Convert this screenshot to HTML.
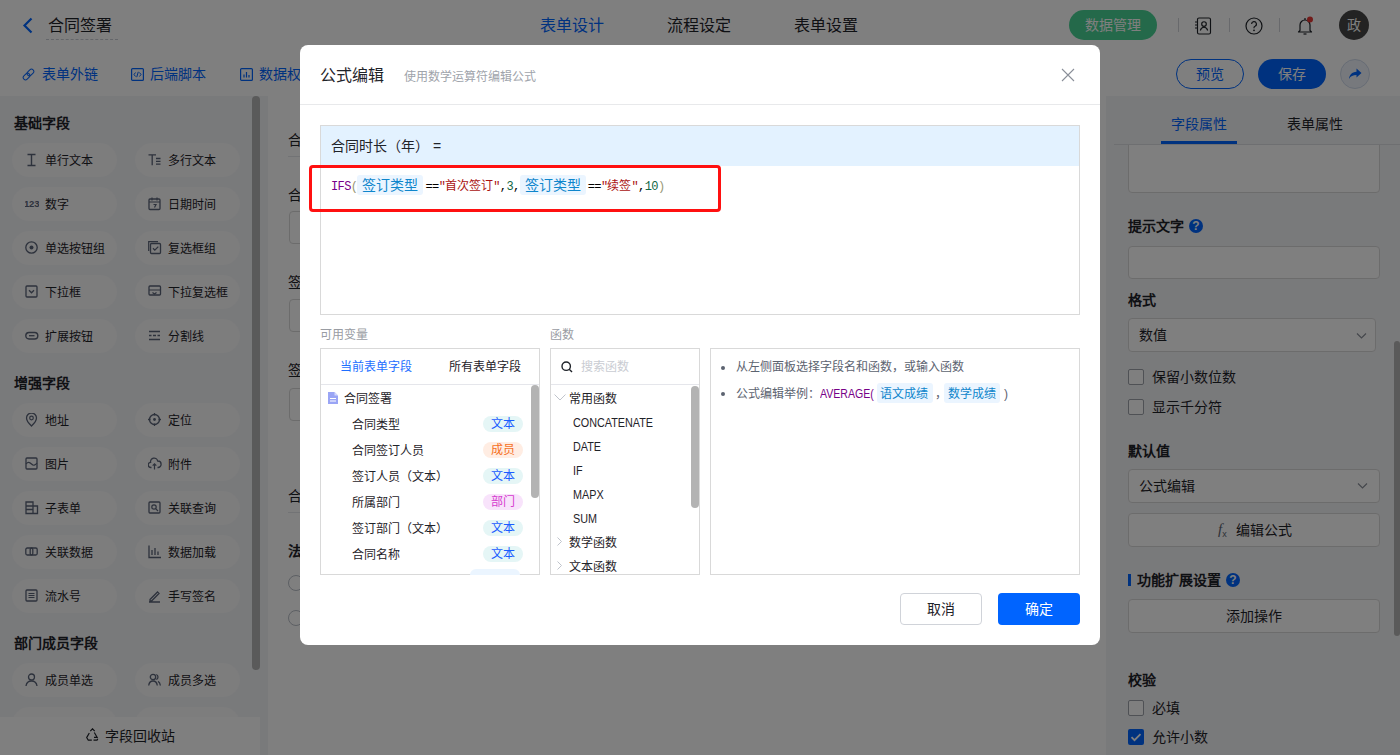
<!DOCTYPE html><html lang="zh-CN"><head><meta charset="utf-8"><style>
*{box-sizing:border-box;margin:0;padding:0}
html,body{width:1400px;height:755px;overflow:hidden;background:#fff;font-family:"Liberation Sans",sans-serif;color:#1f2329}
.a{position:absolute}
.t{position:absolute;white-space:nowrap;line-height:1}
#hdr{left:0;top:0;width:1400px;height:50px;border-bottom:1px solid #e8e9eb;background:#fff}
#tb{left:0;top:50px;width:1400px;height:46px;background:#fff}
#side{left:0;top:96px;width:268px;height:659px;background:#f4f5f7}
.chip{position:absolute;width:105px;height:34px;border-radius:17px;background:#fafafb}
.chip svg{position:absolute;left:14px;top:10px}
.chip .lb{position:absolute;left:33px;top:11px;font-size:12px;line-height:14px;color:#1f2329;white-space:nowrap}
.sh{position:absolute;left:14px;font-size:14px;font-weight:bold;line-height:14px;color:#1f2329;white-space:nowrap}
#canvas{left:268px;top:96px;width:838px;height:659px;background:#fff}
#rp{left:1106px;top:96px;width:294px;height:659px;background:#f3f4f6}
#mask{left:0;top:0;width:1400px;height:755px;background:rgba(0,0,0,.5)}
#modal{left:300px;top:45px;width:800px;height:600px;background:#fff;border-radius:8px}
</style></head><body><div class="a" style="left:0px;top:0px;width:1400px;height:51px;background:#fff;border-bottom:1px solid #e8e9eb"></div>
<svg class="a" style="left:22px;top:17px" width="12" height="17" viewBox="0 0 12 17"><path d="M9.5 1.5 L2.5 8.5 L9.5 15.5" fill="none" stroke="#0064ff" stroke-width="2.2"/></svg>
<div class="t" style="left:48px;top:18px;font-size:16px;color:#1f2329;">合同签署</div>
<div class="a" style="left:46px;top:39px;width:72px;height:1px;border-top:1px dashed #c9cdd4"></div>
<div class="t" style="left:540px;top:18px;font-size:16px;color:#0064ff;">表单设计</div>
<div class="t" style="left:667px;top:18px;font-size:16px;color:#1f2329;">流程设定</div>
<div class="t" style="left:794px;top:18px;font-size:16px;color:#1f2329;">表单设置</div>
<div class="a" style="left:1069px;top:10px;width:88px;height:30px;border-radius:15px;background:#48d294"></div>
<div class="t" style="left:1085px;top:18px;font-size:14px;color:#fff;">数据管理</div>
<div class="a" style="left:1178px;top:18px;width:1px;height:14px;background:#d0d3d9"></div>
<div class="a" style="left:1229px;top:18px;width:1px;height:14px;background:#d0d3d9"></div>
<div class="a" style="left:1279px;top:18px;width:1px;height:14px;background:#d0d3d9"></div>
<svg class="a" style="left:1194px;top:17px" width="18" height="18" viewBox="0 0 18 18"><rect x="3.5" y="1" width="13" height="16" rx="1.5" fill="none" stroke="#1f2329" stroke-width="1.15"/><circle cx="10" cy="7" r="2.3" fill="none" stroke="#1f2329" stroke-width="1.15"/><path d="M6.3 13.5c.6-2.3 2-3.3 3.7-3.3s3.1 1 3.7 3.3" fill="none" stroke="#1f2329" stroke-width="1.15"/><path d="M1 5h3M1 8h3M1 11h3" stroke="#1f2329" stroke-width="1.15"/></svg>
<svg class="a" style="left:1245px;top:17px" width="18" height="18" viewBox="0 0 18 18"><circle cx="9" cy="9" r="8" fill="none" stroke="#1f2329" stroke-width="1.2"/><path d="M6.6 7a2.4 2.4 0 1 1 3.4 2.2c-.7.3-1 .8-1 1.5v.6" fill="none" stroke="#1f2329" stroke-width="1.2"/><circle cx="9" cy="13.3" r=".9" fill="#1f2329"/></svg>
<svg class="a" style="left:1296px;top:16px" width="18" height="20" viewBox="0 0 18 20"><path d="M4 14.5V9a5 5 0 0 1 10 0v5.5l1.5 1.5h-13z" fill="none" stroke="#1f2329" stroke-width="1.2" stroke-linejoin="round"/><path d="M7.5 18h3" stroke="#1f2329" stroke-width="1.2"/><path d="M9 2v2" stroke="#1f2329" stroke-width="1.2"/><circle cx="14" cy="3.5" r="3" fill="#e53935"/></svg>
<div class="a" style="left:1339px;top:10px;width:30px;height:30px;border-radius:50%;background:#464646"></div>
<div class="t" style="left:1347px;top:18px;font-size:14px;color:#fff;">政</div>
<div class="a" style="left:0px;top:50px;width:1400px;height:46px;background:#fff"></div>
<svg class="a" style="left:22px;top:68px" width="13" height="13" viewBox="0 0 13 13"><g transform="rotate(-45 6.5 6.5)" fill="none" stroke="#0064ff" stroke-width="1"><rect x="0" y="4.2" width="7.5" height="4.6" rx="2.3"/><rect x="5.5" y="4.2" width="7.5" height="4.6" rx="2.3"/></g></svg>
<div class="t" style="left:42px;top:67px;font-size:14px;color:#0064ff;">表单外链</div>
<svg class="a" style="left:131px;top:68px" width="13" height="13" viewBox="0 0 13 13"><rect x=".6" y=".6" width="11.8" height="11.8" rx="1" fill="none" stroke="#0064ff" stroke-width="1.2"/><path d="M4.5 4.5 3 6.5l1.5 2M8.5 4.5 10 6.5l-1.5 2M7.3 3.8 5.7 9.2" fill="none" stroke="#0064ff" stroke-width="1"/></svg>
<div class="t" style="left:150px;top:67px;font-size:14px;color:#0064ff;">后端脚本</div>
<svg class="a" style="left:240px;top:68px" width="13" height="13" viewBox="0 0 13 13"><rect x=".6" y=".6" width="11.8" height="11.8" rx="1" fill="none" stroke="#0064ff" stroke-width="1.2"/><path d="M4 9.5V6.5M6.5 9.5V4M9 9.5V7" stroke="#0064ff" stroke-width="1.2"/></svg>
<div class="t" style="left:259px;top:67px;font-size:14px;color:#0064ff;">数据权限</div>
<div class="a" style="left:1176px;top:59px;width:68px;height:30px;border-radius:15px;border:1px solid #0064ff"></div>
<div class="t" style="left:1196px;top:67px;font-size:14px;color:#0064ff;">预览</div>
<div class="a" style="left:1258px;top:59px;width:68px;height:30px;border-radius:15px;background:#0064ff"></div>
<div class="t" style="left:1278px;top:67px;font-size:14px;color:#fff;">保存</div>
<div class="a" style="left:1340px;top:59px;width:30px;height:30px;border-radius:50%;border:1px solid #cfd9ea;background:#eef3fb"></div>
<svg class="a" style="left:1347px;top:66px" width="16" height="16" viewBox="0 0 16 16"><path d="M9.5 2.5 14.5 7l-5 4.5V9C6 9 3.5 10 2 13c.4-4.2 2.8-7 7.5-7.3z" fill="#0064ff"/></svg>
<div class="a" style="left:0px;top:96px;width:268px;height:659px;background:#f3f4f6"></div>
<div class="t" style="left:14px;top:116px;font-size:14px;color:#1f2329;font-weight:bold">基础字段</div>
<div class="chip" style="left:12px;top:143px"><svg width="14" height="14" viewBox="0 0 14 14" style="left:13px;top:10px"><path d="M2.5 1.5h8M2.5 12.5h8M6.5 1.5v11" stroke="#5b6478" stroke-width="1.4" fill="none"/></svg><div class="lb">单行文本</div></div>
<div class="chip" style="left:135px;top:143px"><svg width="14" height="14" viewBox="0 0 14 14" style="left:13px;top:10px"><path d="M.5 1.8h7.5M4.2 1.8v10.5M8 5.5h4.5M8 8.3h4.5M8 11.2h4.5" stroke="#5b6478" stroke-width="1.3" fill="none"/></svg><div class="lb">多行文本</div></div>
<div class="chip" style="left:12px;top:187px"><svg width="14" height="14" viewBox="0 0 14 14" style="left:13px;top:10px"><text x="-1" y="9.5" fill="#5b6478" style="font-family:Liberation Sans,sans-serif;font-weight:bold;font-size:9.5px;letter-spacing:-0.2px">123</text></svg><div class="lb">数字</div></div>
<div class="chip" style="left:135px;top:187px"><svg width="14" height="14" viewBox="0 0 14 14" style="left:13px;top:10px"><rect x="1" y="2" width="11" height="10.5" rx="1" fill="none" stroke="#5b6478" stroke-width="1.3"/><path d="M1 5h11M4 .5v3M9 .5v3M5.5 7.5h2.5l-1.5 3" stroke="#5b6478" stroke-width="1.2" fill="none"/></svg><div class="lb">日期时间</div></div>
<div class="chip" style="left:12px;top:231px"><svg width="14" height="14" viewBox="0 0 14 14" style="left:13px;top:10px"><circle cx="6.5" cy="6.5" r="5.7" fill="none" stroke="#5b6478" stroke-width="1.3"/><circle cx="6.5" cy="6.5" r="2" fill="#5b6478"/></svg><div class="lb">单选按钮组</div></div>
<div class="chip" style="left:135px;top:231px"><svg width="14" height="14" viewBox="0 0 14 14" style="left:13px;top:10px"><rect x="2.5" y="2.5" width="10" height="10" rx="1" fill="none" stroke="#5b6478" stroke-width="1.3"/><path d="M.7 10V.7H10" fill="none" stroke="#5b6478" stroke-width="1.2"/><path d="M5 7.3l1.8 1.8 3.5-3.5" fill="none" stroke="#5b6478" stroke-width="1.3"/></svg><div class="lb">复选框组</div></div>
<div class="chip" style="left:12px;top:275px"><svg width="14" height="14" viewBox="0 0 14 14" style="left:13px;top:10px"><rect x="1" y="1" width="11" height="11" rx="1" fill="none" stroke="#5b6478" stroke-width="1.3"/><path d="M4 5.3l2.5 2.5 2.5-2.5" fill="none" stroke="#5b6478" stroke-width="1.3"/></svg><div class="lb">下拉框</div></div>
<div class="chip" style="left:135px;top:275px"><svg width="14" height="14" viewBox="0 0 14 14" style="left:13px;top:10px"><rect x="1" y="1" width="11.5" height="9" rx="1" fill="none" stroke="#5b6478" stroke-width="1.3"/><path d="M1 5h11.5M4.5 7.5l2 1.5 2-1.5" fill="none" stroke="#5b6478" stroke-width="1.2"/></svg><div class="lb">下拉复选框</div></div>
<div class="chip" style="left:12px;top:319px"><svg width="14" height="14" viewBox="0 0 14 14" style="left:13px;top:10px"><rect x=".8" y="3.5" width="12" height="6.5" rx="3.2" fill="none" stroke="#5b6478" stroke-width="1.4"/><path d="M4 6.7h5.5" stroke="#5b6478" stroke-width="1.3"/></svg><div class="lb">扩展按钮</div></div>
<div class="chip" style="left:135px;top:319px"><svg width="14" height="14" viewBox="0 0 14 14" style="left:13px;top:10px"><path d="M1 2.5h11M1 6.5h2.5M5 6.5h3M9.5 6.5h2.5M1 10.5h11" stroke="#5b6478" stroke-width="1.3" fill="none"/></svg><div class="lb">分割线</div></div>
<div class="t" style="left:14px;top:376px;font-size:14px;color:#1f2329;font-weight:bold">增强字段</div>
<div class="chip" style="left:12px;top:403px"><svg width="14" height="14" viewBox="0 0 14 14" style="left:13px;top:10px"><path d="M6.5 13s-5-4.7-5-8a5 5 0 0 1 10 0c0 3.3-5 8-5 8z" fill="none" stroke="#5b6478" stroke-width="1.3"/><circle cx="6.5" cy="5" r="1.8" fill="none" stroke="#5b6478" stroke-width="1.2"/></svg><div class="lb">地址</div></div>
<div class="chip" style="left:135px;top:403px"><svg width="14" height="14" viewBox="0 0 14 14" style="left:13px;top:10px"><circle cx="6.5" cy="6.5" r="5" fill="none" stroke="#5b6478" stroke-width="1.3"/><circle cx="6.5" cy="6.5" r="1.4" fill="#5b6478"/><path d="M6.5 0v2.5M6.5 10.5V13M0 6.5h2.5M10.5 6.5H13" stroke="#5b6478" stroke-width="1.3"/></svg><div class="lb">定位</div></div>
<div class="chip" style="left:12px;top:447px"><svg width="14" height="14" viewBox="0 0 14 14" style="left:13px;top:10px"><rect x="1" y="1" width="11" height="11" rx="1" fill="none" stroke="#5b6478" stroke-width="1.3"/><path d="M1 7c2-2.5 3.5-2 5.5 0s3.5 1.5 5.5-1" fill="none" stroke="#5b6478" stroke-width="1.2"/></svg><div class="lb">图片</div></div>
<div class="chip" style="left:135px;top:447px"><svg width="14" height="14" viewBox="0 0 14 14" style="left:13px;top:10px"><path d="M3.5 10.5H3a2.6 2.6 0 0 1-.4-5.2A3.6 3.6 0 0 1 9.7 4a3.2 3.2 0 0 1 .3 6.5h-.5" fill="none" stroke="#5b6478" stroke-width="1.3"/><path d="M6.5 12.5V7M4.7 8.6l1.8-1.8 1.8 1.8" fill="none" stroke="#5b6478" stroke-width="1.2"/></svg><div class="lb">附件</div></div>
<div class="chip" style="left:12px;top:491px"><svg width="14" height="14" viewBox="0 0 14 14" style="left:13px;top:10px"><path d="M1 1h7v11.5H1zM8 5h4.5v7.5H8M1 5h7M1 8.5h7" fill="none" stroke="#5b6478" stroke-width="1.3"/></svg><div class="lb">子表单</div></div>
<div class="chip" style="left:135px;top:491px"><svg width="14" height="14" viewBox="0 0 14 14" style="left:13px;top:10px"><rect x="1" y="1" width="11" height="11" rx="1" fill="none" stroke="#5b6478" stroke-width="1.3"/><circle cx="6" cy="6" r="2.2" fill="none" stroke="#5b6478" stroke-width="1.2"/><path d="M7.6 7.6l2.4 2.4M3 3.5" stroke="#5b6478" stroke-width="1.2"/></svg><div class="lb">关联查询</div></div>
<div class="chip" style="left:12px;top:535px"><svg width="14" height="14" viewBox="0 0 14 14" style="left:13px;top:10px"><rect x=".8" y="3" width="7" height="7" rx="1.5" fill="none" stroke="#5b6478" stroke-width="1.3"/><rect x="5.2" y="3" width="7" height="7" rx="1.5" fill="none" stroke="#5b6478" stroke-width="1.3"/></svg><div class="lb">关联数据</div></div>
<div class="chip" style="left:135px;top:535px"><svg width="14" height="14" viewBox="0 0 14 14" style="left:13px;top:10px"><path d="M1 .5v12h12M4 10V5M7 10V3M10 10V6.5" fill="none" stroke="#5b6478" stroke-width="1.3"/></svg><div class="lb">数据加载</div></div>
<div class="chip" style="left:12px;top:579px"><svg width="14" height="14" viewBox="0 0 14 14" style="left:13px;top:10px"><rect x="1" y="1" width="11" height="11" rx="1" fill="none" stroke="#5b6478" stroke-width="1.3"/><path d="M3.5 4.5h6M3.5 6.5h6M3.5 8.5h6" stroke="#5b6478" stroke-width="1.1"/></svg><div class="lb">流水号</div></div>
<div class="chip" style="left:135px;top:579px"><svg width="14" height="14" viewBox="0 0 14 14" style="left:13px;top:10px"><path d="M2 10.5 9.5 3l1.5 1.5L3.5 12H2zM1 13h11" fill="none" stroke="#5b6478" stroke-width="1.3"/></svg><div class="lb">手写签名</div></div>
<div class="t" style="left:14px;top:636px;font-size:14px;color:#1f2329;font-weight:bold">部门成员字段</div>
<div class="chip" style="left:12px;top:663px"><svg width="14" height="14" viewBox="0 0 14 14" style="left:13px;top:10px"><circle cx="6.5" cy="4" r="3" fill="none" stroke="#5b6478" stroke-width="1.3"/><path d="M1 13c.5-3.3 2.7-5 5.5-5s5 1.7 5.5 5" fill="none" stroke="#5b6478" stroke-width="1.3"/></svg><div class="lb">成员单选</div></div>
<div class="chip" style="left:135px;top:663px"><svg width="14" height="14" viewBox="0 0 14 14" style="left:13px;top:10px"><circle cx="5" cy="4" r="2.7" fill="none" stroke="#5b6478" stroke-width="1.3"/><path d="M.7 12.5c.4-3 2-4.5 4.3-4.5s3.9 1.5 4.3 4.5M8.3 1.5a2.7 2.7 0 0 1 0 5M10 8.3c1.3.6 2.1 2 2.4 4.2" fill="none" stroke="#5b6478" stroke-width="1.3"/></svg><div class="lb">成员多选</div></div>
<div class="chip" style="left:12px;top:707px"><svg width="14" height="14" viewBox="0 0 14 14" style="left:13px;top:10px"><circle cx="6.5" cy="4" r="3" fill="none" stroke="#5b6478" stroke-width="1.3"/><path d="M1 13c.5-3.3 2.7-5 5.5-5s5 1.7 5.5 5" fill="none" stroke="#5b6478" stroke-width="1.3"/></svg><div class="lb">部门单选</div></div>
<div class="chip" style="left:135px;top:707px"><svg width="14" height="14" viewBox="0 0 14 14" style="left:13px;top:10px"><circle cx="5" cy="4" r="2.7" fill="none" stroke="#5b6478" stroke-width="1.3"/><path d="M.7 12.5c.4-3 2-4.5 4.3-4.5s3.9 1.5 4.3 4.5M8.3 1.5a2.7 2.7 0 0 1 0 5M10 8.3c1.3.6 2.1 2 2.4 4.2" fill="none" stroke="#5b6478" stroke-width="1.3"/></svg><div class="lb">部门多选</div></div>
<div class="a" style="left:252px;top:96px;width:8px;height:574px;border-radius:4px;background:#b5b5b5"></div>
<div class="a" style="left:0px;top:717px;width:260px;height:38px;background:#fff"></div>
<svg class="a" style="left:85px;top:728px" width="15" height="14" viewBox="0 0 15 14"><path d="M5.3 3.2 7.5.8l2.2 2.4M9.3 4.5l2.8 4.8H9M4.3 5 1.7 9.6l1.6 2.6h3.5M8.5 12.2h3.5l.8-1.5" fill="none" stroke="#1f2329" stroke-width="1.2"/></svg>
<div class="t" style="left:105px;top:729px;font-size:14px;color:#1f2329;">字段回收站</div>
<div class="a" style="left:268px;top:96px;width:838px;height:659px;background:#fff"></div>
<div class="t" style="left:288px;top:133px;font-size:14px;color:#1f2329;">合同信息</div>
<div class="a" style="left:288px;top:156px;width:800px;height:1px;background:#e5e6eb"></div>
<div class="t" style="left:288px;top:188px;font-size:14px;color:#1f2329;">合同名称</div>
<div class="a" style="left:289px;top:211px;width:600px;height:33px;border:1px solid #d9d9d9;border-radius:4px"></div>
<div class="t" style="left:288px;top:275px;font-size:14px;color:#1f2329;">签订类型</div>
<div class="a" style="left:289px;top:299px;width:600px;height:33px;border:1px solid #d9d9d9;border-radius:4px"></div>
<div class="t" style="left:288px;top:363px;font-size:14px;color:#1f2329;">签订人员</div>
<div class="a" style="left:289px;top:388px;width:600px;height:33px;border:1px solid #d9d9d9;border-radius:4px"></div>
<div class="t" style="left:288px;top:489px;font-size:14px;color:#1f2329;">合同时长</div>
<div class="a" style="left:288px;top:512px;width:800px;height:1px;background:#e5e6eb"></div>
<div class="t" style="left:288px;top:544px;font-size:14px;color:#1f2329;font-weight:bold">法务审核</div>
<div class="a" style="left:288px;top:575px;width:16px;height:16px;border:1px solid #b9bec7;border-radius:50%"></div>
<div class="a" style="left:288px;top:610px;width:16px;height:16px;border:1px solid #b9bec7;border-radius:50%"></div>
<div class="a" style="left:1106px;top:96px;width:294px;height:659px;background:#f3f4f6"></div>
<div class="a" style="left:1128px;top:130px;width:252px;height:63px;background:#fff;border:1px solid #d9d9d9;border-radius:4px"></div>
<div class="a" style="left:1114px;top:144px;width:286px;height:1px;background:#dcdee3"></div>
<div class="a" style="left:1106px;top:96px;width:294px;height:48px;background:#f3f4f6"></div>
<div class="t" style="left:1171px;top:117px;font-size:14px;color:#0064ff;">字段属性</div>
<div class="t" style="left:1287px;top:117px;font-size:14px;color:#1f2329;">表单属性</div>
<div class="a" style="left:1161px;top:141px;width:76px;height:3px;background:#0064ff"></div>
<div class="t" style="left:1128px;top:219px;font-size:14px;color:#1f2329;font-weight:bold">提示文字</div>
<div class="a" style="left:1189px;top:219px;width:14px;height:14px;border-radius:50%;background:#0064ff;color:#fff;font:bold 12px/14px 'Liberation Sans',sans-serif;text-align:center">?</div>
<div class="a" style="left:1128px;top:246px;width:252px;height:33px;background:#fff;border:1px solid #d9d9d9;border-radius:4px"></div>
<div class="t" style="left:1128px;top:293px;font-size:14px;color:#1f2329;font-weight:bold">格式</div>
<div class="a" style="left:1128px;top:318px;width:248px;height:34px;background:#fff;border:1px solid #d9d9d9;border-radius:4px"></div>
<div class="t" style="left:1139px;top:328px;font-size:14px;color:#1f2329;">数值</div>
<svg class="a" style="left:1356px;top:332px" width="11" height="8" viewBox="0 0 11 8"><path d="M1 1.5l4.5 4.5 4.5-4.5" fill="none" stroke="#8a8f99" stroke-width="1.2"/></svg>
<div class="a" style="left:1128px;top:369px;width:16px;height:16px;background:#fff;border:1px solid #9ea3ab;border-radius:2px"></div>
<div class="t" style="left:1152px;top:370px;font-size:14px;color:#1f2329;">保留小数位数</div>
<div class="a" style="left:1128px;top:399px;width:16px;height:16px;background:#fff;border:1px solid #9ea3ab;border-radius:2px"></div>
<div class="t" style="left:1152px;top:400px;font-size:14px;color:#1f2329;">显示千分符</div>
<div class="t" style="left:1128px;top:444px;font-size:14px;color:#1f2329;font-weight:bold">默认值</div>
<div class="a" style="left:1128px;top:469px;width:252px;height:34px;background:#fff;border:1px solid #d9d9d9;border-radius:4px"></div>
<div class="t" style="left:1139px;top:479px;font-size:14px;color:#1f2329;">公式编辑</div>
<svg class="a" style="left:1357px;top:482px" width="11" height="8" viewBox="0 0 11 8"><path d="M1 1.5l4.5 4.5 4.5-4.5" fill="none" stroke="#8a8f99" stroke-width="1.2"/></svg>
<div class="a" style="left:1128px;top:513px;width:252px;height:34px;background:#fff;border:1px solid #d9d9d9;border-radius:4px"></div>
<div class="t" style="left:1218px;top:522px;font-size:14px;color:#5c6370;"><i style="font-family:'Liberation Serif',serif;font-size:15px">f</i><span style="font-size:9px;position:relative;top:3px">x</span></div>
<div class="t" style="left:1236px;top:523px;font-size:14px;color:#1f2329;">编辑公式</div>
<div class="a" style="left:1128px;top:574px;width:3px;height:12px;background:#0064ff"></div>
<div class="t" style="left:1137px;top:573px;font-size:14px;color:#1f2329;font-weight:bold">功能扩展设置</div>
<div class="a" style="left:1226px;top:573px;width:14px;height:14px;border-radius:50%;background:#0064ff;color:#fff;font:bold 12px/14px 'Liberation Sans',sans-serif;text-align:center">?</div>
<div class="a" style="left:1128px;top:599px;width:252px;height:34px;background:#fff;border:1px solid #d9d9d9;border-radius:4px"></div>
<div class="t" style="left:1226px;top:609px;font-size:14px;color:#1f2329;">添加操作</div>
<div class="t" style="left:1128px;top:673px;font-size:14px;color:#1f2329;font-weight:bold">校验</div>
<div class="a" style="left:1128px;top:700px;width:16px;height:16px;background:#fff;border:1px solid #9ea3ab;border-radius:2px"></div>
<div class="t" style="left:1152px;top:701px;font-size:14px;color:#1f2329;">必填</div>
<div class="a" style="left:1128px;top:729px;width:16px;height:16px;border-radius:2px;background:#0064ff"></div>
<svg class="a" style="left:1128px;top:729px" width="16" height="16" viewBox="0 0 16 16"><path d="M3.5 8.2l3 3 6-6" fill="none" stroke="#fff" stroke-width="1.8"/></svg>
<div class="t" style="left:1152px;top:730px;font-size:14px;color:#1f2329;">允许小数</div>
<div class="a" style="left:1394px;top:341px;width:6px;height:295px;border-radius:3px;background:#b5b5b5"></div>
<div class="a" style="left:0px;top:0px;width:1400px;height:755px;background:rgba(0,0,0,.5)"></div>
<div class="a" style="left:300px;top:45px;width:800px;height:600px;background:#fff;border-radius:8px"></div>
<div class="t" style="left:320px;top:68px;font-size:16px;color:#1f2329;">公式编辑</div>
<div class="t" style="left:404px;top:71px;font-size:12px;color:#a0a4ab;">使用数学运算符编辑公式</div>
<svg class="a" style="left:1061px;top:68px" width="14" height="14" viewBox="0 0 14 14"><path d="M1 1l12 12M13 1 1 13" stroke="#8a8f99" stroke-width="1.1"/></svg>
<div class="a" style="left:300px;top:104px;width:800px;height:1px;background:#e8e9eb"></div>
<div class="a" style="left:320px;top:125px;width:760px;height:190px;border:1px solid #d9d9d9"></div>
<div class="a" style="left:321px;top:126px;width:758px;height:40px;background:#e3f2ff"></div>
<div class="t" style="left:331px;top:139px;font-size:14px;color:#1f2329;">合同时长（年） =</div>
<div class="a" style="left:331px;top:177px;height:20px;line-height:20px;white-space:nowrap;font-family:'Liberation Mono',monospace;font-size:12px;letter-spacing:-0.6px"><span style="color:#708">IFS</span><span style="color:#997">(</span><span style="display:inline-block;vertical-align:middle;background:#ebf5ff;border-radius:3px;padding:0 5px;margin-right:2px;position:relative;top:-2px;height:20px;line-height:20px;font-size:14px;color:#0f86cc;letter-spacing:0;font-family:'Liberation Sans',sans-serif">签订类型</span><span style="color:#000">==</span><span style="color:#a11">"<span style="font-size:12px;letter-spacing:0">首次签订</span>"</span><span style="color:#000">,</span><span style="color:#164">3</span><span style="color:#000">,</span><span style="display:inline-block;vertical-align:middle;background:#ebf5ff;border-radius:3px;padding:0 5px;margin-right:2px;position:relative;top:-2px;height:20px;line-height:20px;font-size:14px;color:#0f86cc;letter-spacing:0;font-family:'Liberation Sans',sans-serif">签订类型</span><span style="color:#000">==</span><span style="color:#a11">"<span style="font-size:12px;letter-spacing:0">续签</span>"</span><span style="color:#000">,</span><span style="color:#164">10</span><span style="color:#997">)</span></div>
<div class="a" style="left:309px;top:165px;width:412px;height:47px;border:3px solid #ff1010;border-radius:4px"></div>
<div class="t" style="left:320px;top:329px;font-size:12px;color:#999ca3;">可用变量</div>
<div class="t" style="left:550px;top:329px;font-size:12px;color:#999ca3;">函数</div>
<div class="a" style="left:320px;top:348px;width:220px;height:227px;border:1px solid #d9d9d9"></div>
<div class="a" style="left:321px;top:384px;width:218px;height:1px;background:#e5e6eb"></div>
<div class="t" style="left:340px;top:361px;font-size:12px;color:#1e6fff;">当前表单字段</div>
<div class="t" style="left:449px;top:361px;font-size:12px;color:#1f2329;">所有表单字段</div>
<svg class="a" style="left:328px;top:392px" width="10" height="12" viewBox="0 0 10 12"><path d="M0 0h6.5L10 3.5V12H0z" fill="#9aa5f5"/><path d="M2 6.5h6M2 9h6" stroke="#fff" stroke-width="1.1"/><path d="M6.5 0v3.5H10" fill="#d4d9fb"/></svg>
<div class="t" style="left:344px;top:393px;font-size:12px;color:#1f2329;">合同签署</div>
<div class="t" style="left:352px;top:419px;font-size:12px;color:#1f2329;">合同类型</div>
<div class="a" style="left:483px;top:416px;width:40px;height:16px;border-radius:8px;background:#e5f6f6;color:#1a5cff;font-size:12px;line-height:16px;text-align:center">文本</div>
<div class="t" style="left:352px;top:445px;font-size:12px;color:#1f2329;">合同签订人员</div>
<div class="a" style="left:483px;top:442px;width:40px;height:16px;border-radius:8px;background:#ffede3;color:#f5701e;font-size:12px;line-height:16px;text-align:center">成员</div>
<div class="t" style="left:352px;top:471px;font-size:12px;color:#1f2329;">签订人员（文本）</div>
<div class="a" style="left:483px;top:468px;width:40px;height:16px;border-radius:8px;background:#e5f6f6;color:#1a5cff;font-size:12px;line-height:16px;text-align:center">文本</div>
<div class="t" style="left:352px;top:497px;font-size:12px;color:#1f2329;">所属部门</div>
<div class="a" style="left:483px;top:494px;width:40px;height:16px;border-radius:8px;background:#f8e3fb;color:#d63ccf;font-size:12px;line-height:16px;text-align:center">部门</div>
<div class="t" style="left:352px;top:523px;font-size:12px;color:#1f2329;">签订部门（文本）</div>
<div class="a" style="left:483px;top:520px;width:40px;height:16px;border-radius:8px;background:#e5f6f6;color:#1a5cff;font-size:12px;line-height:16px;text-align:center">文本</div>
<div class="t" style="left:352px;top:549px;font-size:12px;color:#1f2329;">合同名称</div>
<div class="a" style="left:483px;top:546px;width:40px;height:16px;border-radius:8px;background:#e5f6f6;color:#1a5cff;font-size:12px;line-height:16px;text-align:center">文本</div>
<div class="a" style="left:470px;top:569px;width:50px;height:6px;border-radius:8px 8px 0 0;background:#ebf5ff"></div>
<div class="a" style="left:531px;top:385px;width:8px;height:113px;border-radius:4px;background:#b3b3b3"></div>
<div class="a" style="left:550px;top:348px;width:150px;height:227px;border:1px solid #d9d9d9"></div>
<div class="a" style="left:551px;top:384px;width:148px;height:1px;background:#e5e6eb"></div>
<svg class="a" style="left:561px;top:361px" width="12" height="12" viewBox="0 0 12 12"><circle cx="5.2" cy="5.2" r="4.2" fill="none" stroke="#1f2329" stroke-width="1.4"/><path d="M8.2 8.2l2.8 2.8" stroke="#1f2329" stroke-width="1.4"/></svg>
<div class="t" style="left:581px;top:361px;font-size:12px;color:#c9ccd2;">搜索函数</div>
<svg class="a" style="left:554px;top:394px" width="12" height="7" viewBox="0 0 12 7"><path d="M.5.5 6 6 11.5.5" fill="none" stroke="#c0c4cc" stroke-width="1"/></svg>
<div class="t" style="left:569px;top:393px;font-size:12px;color:#1f2329;">常用函数</div>
<div class="t" style="left:573px;top:417px;font-size:12px;color:#1f2329;transform:scaleX(0.9);transform-origin:0 0">CONCATENATE</div>
<div class="t" style="left:573px;top:441px;font-size:12px;color:#1f2329;transform:scaleX(0.9);transform-origin:0 0">DATE</div>
<div class="t" style="left:573px;top:465px;font-size:12px;color:#1f2329;transform:scaleX(0.9);transform-origin:0 0">IF</div>
<div class="t" style="left:573px;top:489px;font-size:12px;color:#1f2329;transform:scaleX(0.9);transform-origin:0 0">MAPX</div>
<div class="t" style="left:573px;top:513px;font-size:12px;color:#1f2329;transform:scaleX(0.9);transform-origin:0 0">SUM</div>
<svg class="a" style="left:557px;top:537px" width="5" height="9" viewBox="0 0 5 9"><path d="M.5.5 4.5 4.5.5 8.5" fill="none" stroke="#c0c4cc" stroke-width="1"/></svg>
<div class="t" style="left:569px;top:537px;font-size:12px;color:#1f2329;">数学函数</div>
<svg class="a" style="left:557px;top:561px" width="5" height="9" viewBox="0 0 5 9"><path d="M.5.5 4.5 4.5.5 8.5" fill="none" stroke="#c0c4cc" stroke-width="1"/></svg>
<div class="t" style="left:569px;top:561px;font-size:12px;color:#1f2329;">文本函数</div>
<div class="a" style="left:691px;top:386px;width:8px;height:122px;border-radius:4px;background:#b3b3b3"></div>
<div class="a" style="left:710px;top:348px;width:370px;height:227px;border:1px solid #d9d9d9"></div>
<div class="a" style="left:721px;top:366px;width:4px;height:4px;border-radius:50%;background:#5c6370"></div>
<div class="t" style="left:736px;top:361px;font-size:12px;color:#5c6370;">从左侧面板选择字段名和函数，或输入函数</div>
<div class="a" style="left:721px;top:392px;width:4px;height:4px;border-radius:50%;background:#5c6370"></div>
<div class="t" style="left:736px;top:388px;font-size:12px;color:#5c6370;">公式编辑举例：</div>
<div class="t" style="left:820px;top:388px;font-size:12px;color:#708;transform:scaleX(0.88);transform-origin:0 0">AVERAGE(</div>
<div class="a" style="left:877px;top:383px;width:56px;height:20px;background:#ebf5ff;border-radius:3px"></div>
<div class="t" style="left:880px;top:388px;font-size:12px;color:#0f86cc;">语文成绩</div>
<div class="t" style="left:935px;top:388px;font-size:12px;color:#5c6370;">，</div>
<div class="a" style="left:944px;top:383px;width:56px;height:20px;background:#ebf5ff;border-radius:3px"></div>
<div class="t" style="left:948px;top:388px;font-size:12px;color:#0f86cc;">数学成绩</div>
<div class="t" style="left:1004px;top:388px;font-size:12px;color:#5c6370;">)</div>
<div class="a" style="left:900px;top:593px;width:82px;height:32px;border:1px solid #d0d3d9;border-radius:4px;background:#fff"></div>
<div class="t" style="left:927px;top:602px;font-size:14px;color:#1f2329;">取消</div>
<div class="a" style="left:998px;top:593px;width:82px;height:32px;border-radius:4px;background:#0064ff"></div>
<div class="t" style="left:1025px;top:602px;font-size:14px;color:#fff;">确定</div></body></html>
